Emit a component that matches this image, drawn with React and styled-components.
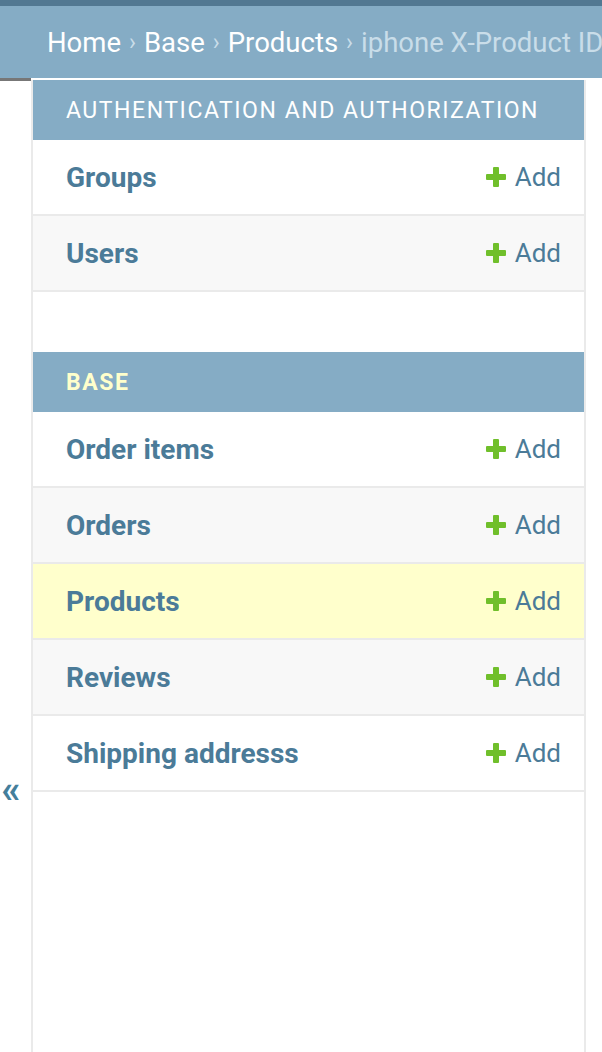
import React from "react";
import styled, { createGlobalStyle } from "styled-components";

const Global = createGlobalStyle`
  html, body { margin: 0; padding: 0; background: #fff; }
  body { font-family: Roboto, "Liberation Sans", sans-serif; width: 602px; height: 1052px; overflow: hidden; }
`;

const TopBar = styled.div`
  height: 6px;
  background: #527892;
`;

const Breadcrumbs = styled.nav`
  height: 72px;
  background: #85acc5;
  display: flex;
  align-items: center;
  padding-left: 47px;
  font-size: 27.5px;
  color: #fff;
  white-space: nowrap;
  overflow: hidden;
`;

const Crumb = styled.span`
  color: ${(p) => (p.$current ? "#c9dde9" : "#fff")};
`;

const Sep = styled.span`
  color: #c9dde9;
  margin: 0 8px;
  font-size: 23px;
`;

const Main = styled.div`
  display: flex;
  height: 974px;
`;

const ToggleCol = styled.div`
  width: 31px;
  display: flex;
  flex-direction: column;
  align-items: center;
  justify-content: flex-start;
  border-top: 3px solid #777;
  padding-top: 689px;
  box-sizing: border-box;
  flex-shrink: 0;
`;

const Toggle = styled.span`
  color: #447e9b;
  font-size: 38px;
  font-weight: 700;
  line-height: 1;
  margin-left: -9px;
`;

const Sidebar = styled.div`
  width: 551px;
  margin-top: 2px;
  border-left: 2px solid #eaeaea;
  border-right: 2px solid #eaeaea;
  display: flex;
  flex-direction: column;
  gap: 60px;
`;

const Module = styled.section`
  display: flex;
  flex-direction: column;
`;

const Caption = styled.div`
  height: 60px;
  background: #85acc5;
  display: flex;
  align-items: center;
  padding-left: 33px;
  font-size: 23px;
  letter-spacing: 1.55px;
  text-transform: uppercase;
  color: ${(p) => (p.$current ? "#ffffcc" : "#fff")};
  font-weight: ${(p) => (p.$current ? 700 : 400)};
`;

const Row = styled.div`
  height: 74px;
  border-bottom: 2px solid #eaeaea;
  display: flex;
  align-items: center;
  justify-content: space-between;
  padding: 0 23px 0 33px;
  background: ${(p) => (p.$current ? "#ffffcc" : p.$alt ? "#f8f8f8" : "#fff")};
`;

const Label = styled.span`
  font-size: 28px;
  font-weight: 700;
  color: #4b7b98;
`;

const AddLink = styled.span`
  display: flex;
  align-items: center;
  gap: 9px;
  font-size: 26px;
  color: #4b7b98;
`;

const Plus = () => (
  <svg width="20" height="20" viewBox="0 0 20 20">
    <rect x="7" y="0" width="6" height="20" rx="1" fill="#70bf2b" />
    <rect x="0" y="7" width="20" height="6" rx="1" fill="#70bf2b" />
  </svg>
);

const modules = [
  { name: "Authentication and Authorization", rows: ["Groups", "Users"] },
  {
    name: "Base",
    current: true,
    rows: ["Order items", "Orders", "Products", "Reviews", "Shipping addresss"],
    currentRow: "Products",
  },
];

export default function App() {
  return (
    <>
      <Global />
      <TopBar />
      <Breadcrumbs>
        <Crumb>Home</Crumb>
        <Sep>›</Sep>
        <Crumb>Base</Crumb>
        <Sep>›</Sep>
        <Crumb>Products</Crumb>
        <Sep>›</Sep>
        <Crumb $current>iphone X-Product ID: 1</Crumb>
      </Breadcrumbs>
      <Main>
        <ToggleCol>
          <Toggle>«</Toggle>
        </ToggleCol>
        <Sidebar>
          {modules.map((m) => (
            <Module key={m.name}>
              <Caption $current={m.current}>{m.name}</Caption>
              {m.rows.map((r, i) => (
                <Row key={r} $alt={i % 2 === 1} $current={r === m.currentRow}>
                  <Label>{r}</Label>
                  <AddLink>
                    <Plus />
                    Add
                  </AddLink>
                </Row>
              ))}
            </Module>
          ))}
        </Sidebar>
      </Main>
    </>
  );
}
